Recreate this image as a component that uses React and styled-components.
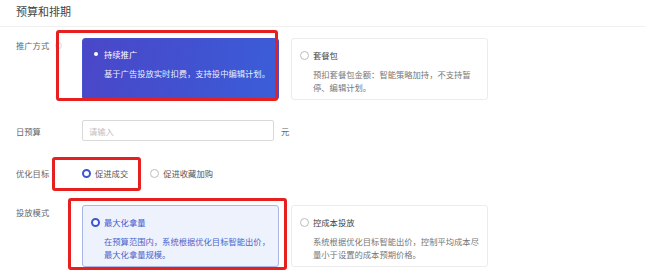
import React from "react";
import styled, { createGlobalStyle, css } from "styled-components";

const GlobalStyle = createGlobalStyle`
  html, body { margin: 0; padding: 0; background: #ffffff; }
  body { font-family: "Noto Sans CJK SC", "Noto Sans", sans-serif; color: #333; }
  * { box-sizing: border-box; }
`;

const Page = styled.div`
  position: relative;
  width: 645px;
  height: 280px;
  overflow: hidden;
  background: #fff;
`;

const Header = styled.div`
  height: 27px;
  padding-left: 16px;
  display: flex;
  align-items: center;
  padding-bottom: 5px;
  font-size: 11px;
  color: #444;
  border-bottom: 1px solid #f0f0f0;
`;

const Form = styled.div`
  display: flex;
  flex-direction: column;
  padding-left: 16px;
`;

const Row = styled.div`
  display: flex;
  align-items: ${(p) => p.$align || "center"};
  margin-top: ${(p) => p.$mt}px;
`;

const Label = styled.div`
  width: 66px;
  flex-shrink: 0;
  display: flex;
  align-items: center;
  gap: 6px;
  font-size: 8.3px;
  line-height: 14px;
  color: #666;
`;

const HelpIcon = styled.span`
  display: inline-block;
  width: 7px;
  height: 7px;
  border-radius: 50%;
  border: 1px solid #dcdcdc;
`;

const CardGroup = styled.div`
  display: flex;
  gap: 12px;
`;

const Card = styled.div`
  width: 197px;
  height: 62px;
  border-radius: 3px;
  border: 1px solid #ececec;
  background: #fff;
  padding: 10px 6px 7px 8px;
  ${(p) =>
    p.$variant === "filled" &&
    css`
      border-color: #4650cc;
      background: linear-gradient(100deg, #4a47c8 0%, #4152d0 55%, #3b5ed8 100%);
      color: #fff;
      padding-top: 9px;
    `}
  ${(p) =>
    p.$variant === "soft" &&
    css`
      border-color: #a9b7e8;
      background: #eef2fc;
    `}
`;

const TitleLine = styled.div`
  display: flex;
  align-items: center;
  gap: 4px;
  height: 12px;
  font-size: 8.3px;
  color: ${(p) => (p.$variant === "filled" ? "#fff" : p.$variant === "soft" ? "#3b58d0" : "#444")};
`;

const Desc = styled.div`
  margin-top: 7px;
  margin-left: 13px;
  width: 170px;
  font-size: 8.3px;
  line-height: 12.5px;
  color: ${(p) => (p.$variant === "filled" ? "rgba(255,255,255,0.92)" : p.$variant === "soft" ? "#4a64cc" : "#777")};
`;

const Radio = styled.span`
  flex-shrink: 0;
  width: 9px;
  height: 9px;
  border-radius: 50%;
  display: inline-flex;
  align-items: center;
  justify-content: center;
  ${(p) =>
    p.$state === "on"
      ? css`
          border: 2.6px solid #3b56d2;
          background: #fff;
        `
      : p.$state === "inverse"
      ? css`
          background: transparent;
          &::after {
            content: "";
            width: 4px;
            height: 4px;
            border-radius: 50%;
            background: #fff;
          }
        `
      : css`
          border: 1px solid #bdbdbd;
          background: #fff;
        `}
`;

const Input = styled.div`
  width: 192px;
  height: 21px;
  border: 1px solid #d9d9d9;
  border-radius: 2px;
  display: flex;
  align-items: center;
  padding-left: 6px;
  font-size: 8.3px;
  color: #bfbfbf;
`;

const Unit = styled.span`
  margin-left: 7px;
  font-size: 8.3px;
  color: #666;
`;

const RadioGroup = styled.div`
  display: flex;
  align-items: center;
  gap: 22px;
  height: 14px;
`;

const RadioItem = styled.label`
  display: flex;
  align-items: center;
  gap: 4px;
  font-size: 8.3px;
  color: #555;
`;

const Highlight = styled.div`
  position: absolute;
  left: ${(p) => p.$x}px;
  top: ${(p) => p.$y}px;
  width: ${(p) => p.$w}px;
  height: ${(p) => p.$h}px;
  border: 3px solid #e5201f;
  border-radius: 3px;
  pointer-events: none;
`;

function OptionCard({ variant, radio, title, desc }) {
  return (
    <Card $variant={variant}>
      <TitleLine $variant={variant}>
        <Radio $state={radio} />
        <span>{title}</span>
      </TitleLine>
      <Desc $variant={variant}>{desc}</Desc>
    </Card>
  );
}

export default function App() {
  return (
    <>
      <GlobalStyle />
      <Page>
        <Header>预算和排期</Header>
        <Form>
          <Row $mt={11} $align="flex-start">
            <Label>
              推广方式
              <HelpIcon />
            </Label>
            <CardGroup>
              <OptionCard
                variant="filled"
                radio="inverse"
                title="持续推广"
                desc="基于广告投放实时扣费，支持投中编辑计划。"
              />
              <OptionCard
                radio="off"
                title="套餐包"
                desc="预扣套餐包金额：智能策略加持，不支持暂停、编辑计划。"
              />
            </CardGroup>
          </Row>

          <Row $mt={20}>
            <Label>日预算</Label>
            <Input>请输入</Input>
            <Unit>元</Unit>
          </Row>

          <Row $mt={25}>
            <Label>优化目标</Label>
            <RadioGroup>
              <RadioItem>
                <Radio $state="on" />
                促进成交
              </RadioItem>
              <RadioItem>
                <Radio $state="off" />
                促进收藏加购
              </RadioItem>
            </RadioGroup>
          </Row>

          <Row $mt={25} $align="flex-start">
            <Label>投放模式</Label>
            <CardGroup>
              <OptionCard
                variant="soft"
                radio="on"
                title="最大化拿量"
                desc="在预算范围内，系统根据优化目标智能出价，最大化拿量规模。"
              />
              <OptionCard
                radio="off"
                title="控成本投放"
                desc="系统根据优化目标智能出价，控制平均成本尽量小于设置的成本预期价格。"
              />
            </CardGroup>
          </Row>
        </Form>

        <Highlight $x={56} $y={30} $w={222} $h={71} />
        <Highlight $x={52} $y={157} $w={89} $h={34} />
        <Highlight $x={68} $y={198} $w={219} $h={72} />
      </Page>
    </>
  );
}
